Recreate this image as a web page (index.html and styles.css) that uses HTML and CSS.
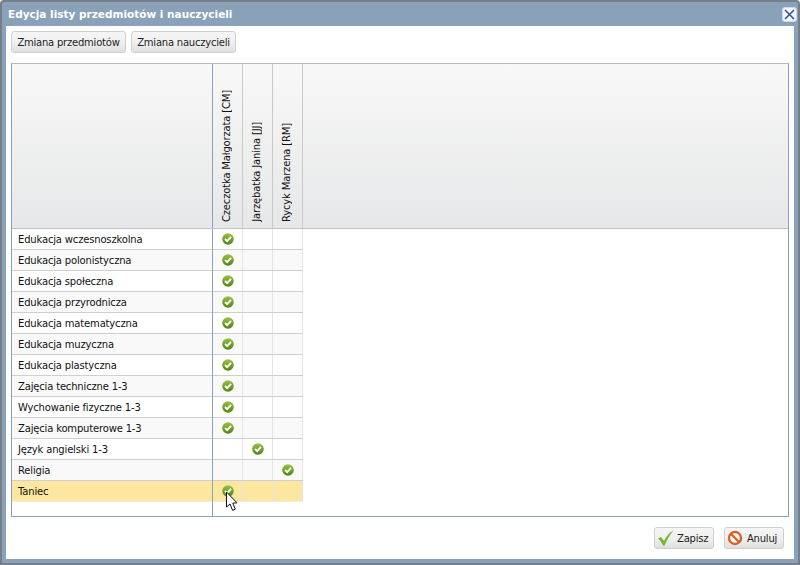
FILE: index.html
```html
<!DOCTYPE html>
<html lang="pl">
<head>
    <meta charset="UTF-8">
    <title>Edycja listy przedmiotów i nauczycieli</title>
    <link rel="stylesheet" href="styles.css">
</head>
<body>
    <svg width="0" height="0" class="defs">
        <defs>
            <linearGradient id="ok-fill" x1="0" y1="0" x2="0" y2="1">
                <stop offset="0" stop-color="#9cc445"/>
                <stop offset="1" stop-color="#4a8410"/>
            </linearGradient>
            <symbol id="ok" viewBox="0 0 12 12">
                <circle cx="6" cy="6" r="5.8" fill="url(#ok-fill)"/>
                <path d="M3 6 L5.2 8.1 L9 3.9" fill="none" stroke="#fff" stroke-width="1.9"/>
            </symbol>
        </defs>
    </svg>

    <div class="window">
        <div class="title-bar">
            <span class="title">Edycja listy przedmiotów i nauczycieli</span>
            <button class="close-btn" aria-label="Zamknij">
                <svg width="11" height="11" viewBox="0 0 11 11"><path d="M1 1 L10 10 M10 1 L1 10" stroke="#2f4f96" stroke-width="1.5"/></svg>
            </button>
        </div>

        <div class="content">
            <div class="toolbar">
                <button class="btn btn-first">Zmiana przedmiotów</button>
                <button class="btn btn-second">Zmiana nauczycieli</button>
            </div>

            <div class="grid-panel">
                <div class="grid-head">
                    <div class="name-col"></div>
                    <div class="head-cell first-col"><span>Czeczotka Małgorzata [CM]</span></div>
                    <div class="head-cell"><span>Jarzębatka Janina [JJ]</span></div>
                    <div class="head-cell"><span>Rycyk Marzena [RM]</span></div>
                    <div class="head-rest"></div>
                </div>

                <div class="rows">
                    <div class="row">
                        <div class="name-col">Edukacja wczesnoszkolna</div>
                        <div class="cell first-col"><svg class="ok"><use href="#ok"/></svg></div>
                        <div class="cell"></div>
                        <div class="cell"></div>
                    </div>
                    <div class="row alt">
                        <div class="name-col">Edukacja polonistyczna</div>
                        <div class="cell first-col"><svg class="ok"><use href="#ok"/></svg></div>
                        <div class="cell"></div>
                        <div class="cell"></div>
                    </div>
                    <div class="row">
                        <div class="name-col">Edukacja społeczna</div>
                        <div class="cell first-col"><svg class="ok"><use href="#ok"/></svg></div>
                        <div class="cell"></div>
                        <div class="cell"></div>
                    </div>
                    <div class="row alt">
                        <div class="name-col">Edukacja przyrodnicza</div>
                        <div class="cell first-col"><svg class="ok"><use href="#ok"/></svg></div>
                        <div class="cell"></div>
                        <div class="cell"></div>
                    </div>
                    <div class="row">
                        <div class="name-col">Edukacja matematyczna</div>
                        <div class="cell first-col"><svg class="ok"><use href="#ok"/></svg></div>
                        <div class="cell"></div>
                        <div class="cell"></div>
                    </div>
                    <div class="row alt">
                        <div class="name-col">Edukacja muzyczna</div>
                        <div class="cell first-col"><svg class="ok"><use href="#ok"/></svg></div>
                        <div class="cell"></div>
                        <div class="cell"></div>
                    </div>
                    <div class="row">
                        <div class="name-col">Edukacja plastyczna</div>
                        <div class="cell first-col"><svg class="ok"><use href="#ok"/></svg></div>
                        <div class="cell"></div>
                        <div class="cell"></div>
                    </div>
                    <div class="row alt">
                        <div class="name-col">Zajęcia techniczne 1-3</div>
                        <div class="cell first-col"><svg class="ok"><use href="#ok"/></svg></div>
                        <div class="cell"></div>
                        <div class="cell"></div>
                    </div>
                    <div class="row">
                        <div class="name-col">Wychowanie fizyczne 1-3</div>
                        <div class="cell first-col"><svg class="ok"><use href="#ok"/></svg></div>
                        <div class="cell"></div>
                        <div class="cell"></div>
                    </div>
                    <div class="row alt">
                        <div class="name-col">Zajęcia komputerowe 1-3</div>
                        <div class="cell first-col"><svg class="ok"><use href="#ok"/></svg></div>
                        <div class="cell"></div>
                        <div class="cell"></div>
                    </div>
                    <div class="row">
                        <div class="name-col">Język angielski 1-3</div>
                        <div class="cell first-col"></div>
                        <div class="cell"><svg class="ok"><use href="#ok"/></svg></div>
                        <div class="cell"></div>
                    </div>
                    <div class="row alt">
                        <div class="name-col">Religia</div>
                        <div class="cell first-col"></div>
                        <div class="cell"></div>
                        <div class="cell"><svg class="ok"><use href="#ok"/></svg></div>
                    </div>
                    <div class="row selected">
                        <div class="name-col">Taniec</div>
                        <div class="cell first-col">
                            <svg class="ok"><use href="#ok"/></svg>
                            <!-- kursor nad komórką -->
                            <svg class="cursor" width="13" height="21" viewBox="0 0 13 21">
                                <path d="M1.5 1 L1.5 16 L5 13 L7.6 19.4 L10.3 18.2 L7.8 12.2 L12 11.8 Z" fill="#fff" stroke="#111" stroke-width="1"/>
                            </svg>
                        </div>
                        <div class="cell"></div>
                        <div class="cell"></div>
                    </div>
                </div>
            </div>

            <div class="footer">
                <button class="btn btn-save">
                    <svg width="18" height="18" viewBox="0 0 18 18"><path d="M1 9.5 L4 8 L7 12 C9 7.5 12.5 3.5 16.5 1.5 C13 5.5 10 10.5 7.6 16.5 L6 16.5 C4.8 13.5 3 11.2 1 9.5 Z" fill="#7ab52f"/></svg>
                    Zapisz
                </button>
                <button class="btn btn-cancel">
                    <svg width="16" height="16" viewBox="0 0 16 16"><circle cx="8" cy="8" r="6" fill="#fff" stroke="#d9602a" stroke-width="2.4"/><path d="M4 4 L12 12" stroke="#d9602a" stroke-width="2.4"/></svg>
                    Anuluj
                </button>
            </div>
        </div>
    </div>
</body>
</html>
```

FILE: styles.css
```css
* {
    box-sizing: border-box;
}

html, body {
    margin: 0;
    height: 100%;
}

body {
    font-family: "DejaVu Sans", Tahoma, sans-serif;
    font-size: 10px;
    letter-spacing: -0.17px;
    color: #111;
    overflow: hidden;
}

.defs {
    display: block;
    height: 0;
}

.window {
    width: 800px;
    height: 565px;
    padding: 0 4px 4px;
    display: flex;
    flex-direction: column;
    background: #8aa2b9;
    border: 2px solid #767f88;
    border-radius: 4px 4px 0 0;
}

.title-bar {
    height: 24px;
    flex: none;
    display: flex;
    align-items: center;
    justify-content: space-between;
}

.title {
    margin-left: 2px;
    font-weight: bold;
    font-size: 10.5px;
    letter-spacing: 0;
    color: #fff;
}

.close-btn {
    width: 15px;
    height: 15px;
    margin-right: -3px;
    padding: 0;
    display: flex;
    align-items: center;
    justify-content: center;
    background: #f2f6fd;
    border: 1px solid #c9d8ee;
    border-radius: 3px;
}

.content {
    flex: 1;
    display: flex;
    flex-direction: column;
    padding: 5px 5px 0;
    background: #fff;
}

.toolbar {
    display: flex;
    gap: 5px;
    height: 32px;
    flex: none;
}

.btn {
    height: 22px;
    padding: 0;
    display: inline-flex;
    align-items: center;
    justify-content: center;
    font-family: inherit;
    font-size: 10px;
    letter-spacing: -0.22px;
    color: #222;
    background: linear-gradient(#f6f6f6 0%, #efefef 55%, #dfdfdf 100%);
    border: 1px solid #cfcfcf;
    border-radius: 3px;
}

.btn-first {
    width: 115px;
}

.btn-second {
    width: 105px;
}

.grid-panel {
    height: 454px;
    flex: none;
    border: 1px solid #8aa2b9;
    border-top-color: #b9b9b9;
    position: relative;
    display: flex;
    flex-direction: column;
}

.grid-head {
    height: 165px;
    flex: none;
    display: flex;
    background: linear-gradient(#f8f8f8, #e6e7e8);
    border-bottom: 1px solid #c4c4c4;
}

.name-col {
    width: 200px;
    flex: none;
    padding-left: 6px;
}

.head-cell, .cell {
    width: 30px;
    flex: none;
    border-right: 1px solid #c9c9c9;
}

.head-cell {
    display: flex;
    flex-direction: column;
    justify-content: flex-end;
    align-items: center;
    padding-bottom: 6px;
}

.head-cell span {
    writing-mode: vertical-rl;
    transform: rotate(180deg);
    white-space: nowrap;
    margin-left: -2px;
}

.first-col {
    width: 31px;
    border-left: 1px solid #8aa2b9;
    border-right: 1px solid #dcdcdc;
}

.head-cell.first-col {
    border-right-color: #c9c9c9;
}

.head-rest {
    flex: 1;
}

.rows {
    flex: 1;
    position: relative;
}

/* niebieska linia kolumny biegnie do dołu panelu */
.rows::after {
    content: "";
    position: absolute;
    top: 0;
    bottom: 0;
    left: 200px;
    width: 1px;
    background: #8aa2b9;
}

.row {
    height: 21px;
    width: 291px;
    display: flex;
    align-items: center;
    border-bottom: 1px solid #cfcfcf;
}

.row.alt {
    background: #f9f9f9;
}

.row.selected {
    background: #fde6a0;
    border-bottom-color: #f0ecdf;
}

.row .cell {
    height: 100%;
    display: flex;
    align-items: center;
    justify-content: center;
    position: relative;
    border-right-color: #e4e4e4;
}

.ok {
    width: 12px;
    height: 12px;
    display: block;
}

.cursor {
    position: absolute;
    left: 12px;
    top: 10px;
    z-index: 2;
}

.footer {
    flex: 1;
    display: flex;
    justify-content: flex-end;
    gap: 10px;
    padding: 10px 5px 0 0;
}

.btn-save, .btn-cancel {
    width: 60px;
    justify-content: flex-start;
    padding-left: 2px;
}

.btn-save {
    gap: 2px;
}

.btn-cancel {
    gap: 4px;
}
```
